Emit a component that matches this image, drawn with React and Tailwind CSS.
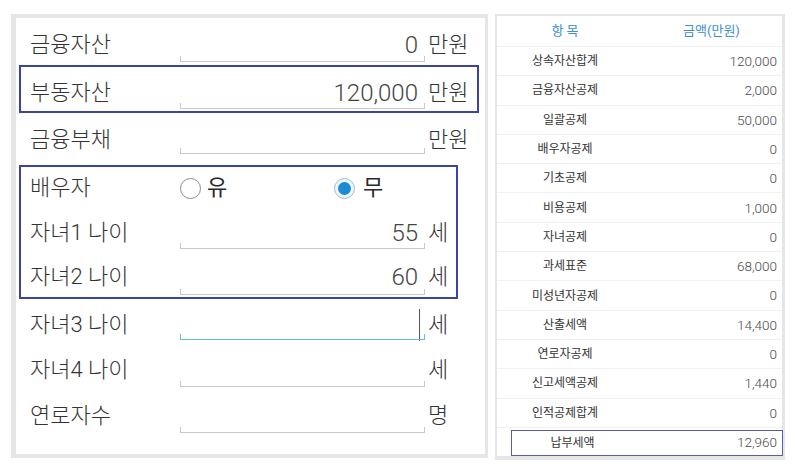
import React from "react";

const FONT = { fontFamily: "Roboto, 'Noto Sans CJK KR', sans-serif" };

function Underline({ cls, focused }) {
  return (
    <div
      className={
        "absolute left-0 right-0 h-[6px] border-x border-b " +
        (focused ? "border-[#5fc0da] " : "border-[#c9c9c9] ") +
        cls
      }
    />
  );
}

function Field({ value, unit, ub, focused, cursor }) {
  return (
    <>
      <div className="relative flex h-full w-[245px] items-center justify-end pr-[7px]">
        {cursor ? (
          <div className="mr-[-2px] h-[32px] w-[1px] bg-[#555]" />
        ) : (
          <span className="text-[24px] font-light leading-[30px] text-[#444]">{value}</span>
        )}
        <Underline cls={ub} focused={focused} />
      </div>
      <span className="ml-[3px] text-[22px] font-light leading-[30px] text-[#333]">{unit}</span>
    </>
  );
}

function Label({ children }) {
  return <span className="w-[150px] text-[22px] font-light leading-[30px] text-[#333]">{children}</span>;
}

function Radio({ checked }) {
  if (checked) {
    return (
      <div className="flex h-[21px] w-[21px] items-center justify-center rounded-full border border-[#9dbdd0] bg-[#eef6fb]">
        <div className="h-[13px] w-[13px] rounded-full bg-[#1b8bd4]" />
      </div>
    );
  }
  return <div className="h-[21px] w-[21px] rounded-full border border-[#8a8a8a] bg-white" />;
}

const rows = [
  { label: "상속자산합계", value: "120,000" },
  { label: "금융자산공제", value: "2,000" },
  { label: "일괄공제", value: "50,000" },
  { label: "배우자공제", value: "0" },
  { label: "기초공제", value: "0" },
  { label: "비용공제", value: "1,000" },
  { label: "자녀공제", value: "0" },
  { label: "과세표준", value: "68,000" },
  { label: "미성년자공제", value: "0" },
  { label: "산출세액", value: "14,400" },
  { label: "연로자공제", value: "0" },
  { label: "신고세액공제", value: "1,440" },
  { label: "인적공제합계", value: "0" },
];

export default function App() {
  return (
    <div className="flex h-[469px] w-[796px] bg-white pl-[11px] pt-[14px]" style={FONT}>
      {/* Left panel */}
      <div className="h-[444px] w-[477px] border-b-[4px] border-l-[5px] border-r-[3px] border-t-[4px] border-[#e6e6e6] bg-white">
        <div className="flex h-[47px] items-center pl-[14px] pt-[7px]">
          <Label>금융자산</Label>
          <Field value="0" unit="만원" ub="bottom-[3px]" />
        </div>
        <div className="ml-[3px] mr-[6px] h-[48px] border-2 border-[#3b43a6]">
          <div className="flex h-[44px] items-center pl-[9px] pt-[8px]">
            <Label>부동자산</Label>
            <Field value="120,000" unit="만원" ub="bottom-[2px]" />
          </div>
        </div>
        <div className="flex h-[52px] items-center pl-[14px] pt-[2px]">
          <Label>금융부채</Label>
          <Field value="" unit="만원" ub="bottom-[11px]" />
        </div>
        <div className="ml-[3px] h-[134px] w-[439px] border-2 border-[#3b43a6]">
          <div className="flex h-[42px] items-center pl-[9px]">
            <Label>배우자</Label>
            <div className="flex w-[154px] items-center gap-[6px]">
              <Radio />
              <span className="text-[22px] font-normal leading-[30px] text-[#2a2a2a]">유</span>
            </div>
            <div className="flex items-center gap-[8px]">
              <Radio checked />
              <span className="text-[22px] font-normal leading-[30px] text-[#2a2a2a]">무</span>
            </div>
          </div>
          <div className="flex h-[44px] items-center pl-[9px] pt-[4px]">
            <Label>자녀1 나이</Label>
            <Field value="55" unit="세" ub="bottom-[4px]" />
          </div>
          <div className="flex h-[44px] items-center pl-[9px] pt-[4px]">
            <Label>자녀2 나이</Label>
            <Field value="60" unit="세" ub="bottom-[2px]" />
          </div>
        </div>
        <div className="flex h-[48px] items-center pl-[14px] pt-[4px]">
          <Label>자녀3 나이</Label>
          <Field value="" unit="세" ub="bottom-[7px]" focused cursor />
        </div>
        <div className="flex h-[46px] items-center pl-[14px]">
          <Label>자녀4 나이</Label>
          <Field value="" unit="세" ub="bottom-[6px]" />
        </div>
        <div className="flex h-[46px] items-center pl-[14px]">
          <Label>연로자수</Label>
          <Field value="" unit="명" ub="bottom-[6px]" />
        </div>
      </div>

      {/* Right panel */}
      <div className="ml-[7px] h-[446px] w-[290px] border-b-[4px] border-l-[2px] border-r-[3px] border-t-[2px] border-[#e6e6e6] bg-white">
        <div className="flex h-[31px] items-center border-b border-[#f1f1f1]">
          <div className="w-[136px] text-center text-[13px] text-[#3d8fd4]">항 목</div>
          <div className="flex-1 pl-[8px] text-center text-[13px] text-[#3d8fd4]">금액(만원)</div>
        </div>
        {rows.map((r) => (
          <div key={r.label} className="flex h-[29.3px] items-center border-b border-[#f1f1f1]">
            <div className="w-[136px] text-center text-[12px] text-[#333]">{r.label}</div>
            <div className="flex-1 pr-[5px] text-right text-[13.5px] font-light text-[#4a4a4a]">{r.value}</div>
          </div>
        ))}
        <div className="flex h-[29.3px] items-center pl-[14px]">
          <div className="mr-[-1px] flex h-[26px] flex-1 items-center border border-[#5a5ab0]">
            <div className="w-[121px] text-center text-[12px] text-[#333]">납부세액</div>
            <div className="flex-1 pr-[5px] text-right text-[13.5px] font-light text-[#4a4a4a]">12,960</div>
          </div>
        </div>
      </div>
    </div>
  );
}
